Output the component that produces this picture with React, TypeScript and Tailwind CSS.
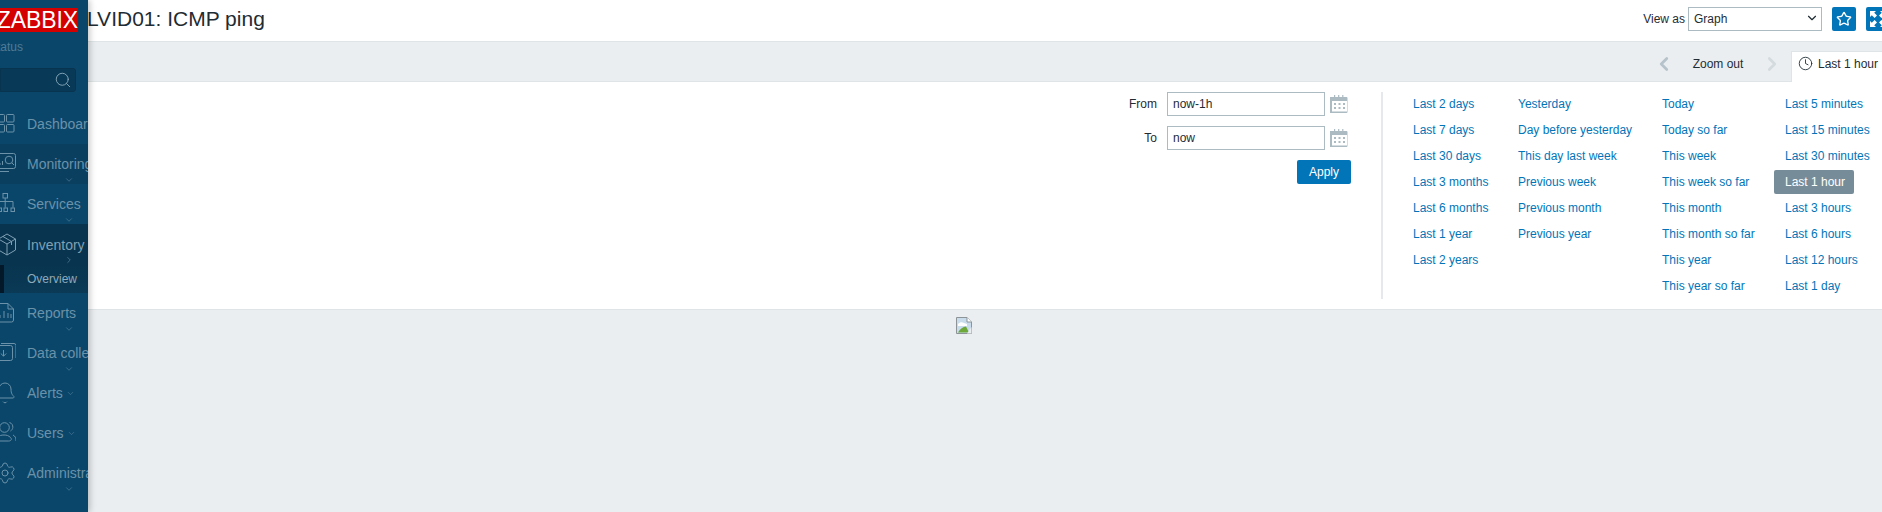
import type { ReactNode } from 'react'
import { Bell, ChevronDown, ChevronLeft, ChevronRight, Clock, Search, Settings, Star } from 'lucide-react'

const PRESETS = [
  { width: 'w-[105px]', items: ['Last 2 days', 'Last 7 days', 'Last 30 days', 'Last 3 months', 'Last 6 months', 'Last 1 year', 'Last 2 years'] },
  { width: 'w-[144px]', items: ['Yesterday', 'Day before yesterday', 'This day last week', 'Previous week', 'Previous month', 'Previous year'] },
  { width: 'w-[123px]', items: ['Today', 'Today so far', 'This week', 'This week so far', 'This month', 'This month so far', 'This year', 'This year so far'] },
  { width: 'w-[108px]', items: ['Last 5 minutes', 'Last 15 minutes', 'Last 30 minutes', 'Last 1 hour', 'Last 3 hours', 'Last 6 hours', 'Last 12 hours', 'Last 1 day'] },
]

// coordinates: x is the screen x, y is relative to the row centre
function Glyph({ children }: { children: ReactNode }) {
  return (
    <svg width="24" height="24" viewBox="-8 -12 24 24" fill="none" stroke="currentColor" strokeWidth="1" className="-ml-[8px] mr-[11px] shrink-0">
      {children}
    </svg>
  )
}

const ICONS: Record<string, ReactNode> = {
  dashboard: (
    <Glyph>
      <rect x="-2.5" y="-9.5" width="7" height="7.5" rx="1" />
      <rect x="6.5" y="-9.5" width="7.5" height="7.5" rx="1" />
      <rect x="-2.5" y="0.5" width="7" height="7.5" rx="1" />
      <rect x="6.5" y="0.5" width="7.5" height="7.5" rx="1" />
    </Glyph>
  ),
  monitoring: (
    <Glyph>
      <path d="M-5 -10.5H13.5a2 2 0 0 1 2 2V2.5a2 2 0 0 1-2 2H-5" />
      <path d="M0 7.5H9" />
      <circle cx="9" cy="-4" r="3.8" />
      <path d="M11.8 -1.2L14 1" />
      <path d="M0 1V-1M2.5 1V-3" />
    </Glyph>
  ),
  services: (
    <Glyph>
      <rect x="3" y="-10.5" width="4.5" height="4.5" />
      <path d="M5.2 -6V3.5M-2 -2.5H13V3.5" />
      <rect x="4" y="4" width="3.5" height="3.5" />
      <rect x="11" y="4" width="3.5" height="3.5" />
      <rect x="-3" y="4" width="4.5" height="3.5" />
    </Glyph>
  ),
  inventory: (
    <Glyph>
      <path d="M7 -11L15.5 -6V5L7 10L-1.5 5V-6Z" />
      <path d="M-1.5 -6L7 -1L15.5 -6M7 -1V10M3 -8.5L11.5 -3.5V0" />
    </Glyph>
  ),
  reports: (
    <Glyph>
      <path d="M-4 -9.5H8L13.5 -4V7a2 2 0 0 1-2 2H-4" />
      <path d="M8 -9.5V-4H13.5" />
      <path d="M1 5V2M5 5V-2M9 5V0M12 5V1" transform="translate(-1 0)" />
    </Glyph>
  ),
  data: (
    <Glyph>
      <path d="M-4 -7.5H10.5a2 2 0 0 1 2 2V5.5a2 2 0 0 1-2 2H-4" />
      <path d="M1 -9.5H14a2 2 0 0 1 2 2V5" />
      <path d="M3.5 -3V3M0.8 0.5L3.5 3.2L6.2 0.5" />
    </Glyph>
  ),
  alerts: <Bell size={24} strokeWidth={1} className="-ml-[7px] mr-[10px] shrink-0" />,
  users: (
    <Glyph>
      <circle cx="4.5" cy="-5.5" r="4.8" />
      <path d="M-4 8H8.5c3 0 3.5-2 2-3.5C8.5 2.5 6.5 2 4 2S-1 2.5-3 4.5C-4.5 6-4.5 8-4 8Z" />
      <path d="M9.5 -10.5c2.5 0.8 3.5 2.8 3.3 5c-0.2 1.6-1 2.7-2.3 3.5M13 2c2 1 3.3 3 3 6" />
    </Glyph>
  ),
  administration: <Settings size={24} strokeWidth={1} className="-ml-[7px] mr-[10px] shrink-0" />,
}

const MENU = [
  { key: 'dashboard', label: 'Dashboards' },
  { key: 'monitoring', label: 'Monitoring', arrow: 'below', dark: 'bg-[#0a3f60]' },
  { key: 'services', label: 'Services', arrow: 'below' },
  { key: 'inventory', label: 'Inventory', arrow: 'side', dark: 'bg-[#08344f]', bright: true },
  { key: 'reports', label: 'Reports', arrow: 'below' },
  { key: 'data', label: 'Data collection', arrow: 'below' },
  { key: 'alerts', label: 'Alerts', arrow: 'inline' },
  { key: 'users', label: 'Users', arrow: 'inline' },
  { key: 'administration', label: 'Administration', arrow: 'below' },
]

function Sidebar() {
  return (
    <aside className="relative z-10 flex h-full w-[88px] shrink-0 flex-col overflow-hidden bg-[#0a466a] shadow-[2px_0_6px_rgba(0,0,0,0.22)]">
      <div className="mt-[8px] flex h-[24px] w-[78px] items-center justify-end overflow-hidden bg-[#d40000] text-[23px] whitespace-nowrap text-white">
        <span className="tracking-[-0.1px]">ZABBIX</span>
      </div>
      <div className="mt-[8px] -ml-[11px] h-[14px] text-xs leading-[14px] text-[#4d7c98]">Status</div>
      <div className="mt-[14px] flex h-[24px] w-[76px] items-center justify-end rounded-r-[3px] border border-[#08344f] bg-[#083a58] pr-[3px] text-[#8aa9bb]">
        <Search size={18} strokeWidth={1.2} />
      </div>
      <nav className="mt-[12px] flex flex-col">
        {MENU.map(m => (
          <div key={m.key}>
            <div className={`relative flex items-center text-sm whitespace-nowrap ${m.key === 'inventory' ? 'h-[41px]' : 'h-[40px]'} ${m.dark ?? ''} ${m.bright ? 'text-[#7fa0b4]' : 'text-[#6b92a9]'}`}>
              {ICONS[m.key]}
              <span>{m.label}</span>
              {m.arrow === 'inline' && <ChevronDown size={9} strokeWidth={1.2} className="ml-[3px]" />}
              {m.arrow === 'below' && <ChevronDown size={10} strokeWidth={1.2} className="absolute top-[31px] left-[64px]" />}
              {m.arrow === 'side' && <ChevronRight size={10} strokeWidth={1.2} className="absolute top-[31px] left-[64px]" />}
            </div>
            {m.key === 'inventory' && (
              <div className="flex h-[28px] items-center bg-gradient-to-b from-[#08344f] to-[#0a3a56] text-xs text-[#8eaabb]">
                <div className="h-full w-[4px] bg-[#03192a]" />
                <span className="ml-[23px]">Overview</span>
              </div>
            )}
          </div>
        ))}
      </nav>
    </aside>
  )
}

function CalendarIcon() {
  return (
    <svg width="19" height="19" viewBox="0 0 19 19" className="mb-[2px] ml-[5px] shrink-0 text-[#acbbc2]" fill="currentColor">
      <path d="M1.5 3H4V1h1.2v2h2.9V1h1.2v2h2.9V1h1.2v2h3.1a1 1 0 0 1 1 1v14a1 1 0 0 1-1 1h-16a1 1 0 0 1-1-1V4a1 1 0 0 1 1-1Zm.5 4v10.5h15V7Z" />
      <path d="M4 9h2v2H4zM8.5 9h2v2h-2zM13 9h2v2h-2zM4 13h2v2H4zM8.5 13h2v2h-2zM13 13h2v2h-2z" />
    </svg>
  )
}

function DateRow({ label, value }: { label: string; value: string }) {
  return (
    <div className="mr-[2px] flex h-[24px] items-center">
      <label className="mr-[10px] text-right">{label}</label>
      <input readOnly value={value} className="h-[24px] w-[158px] border border-[#acbbc2] bg-white px-[5px] text-xs text-[#1f2c33] outline-none" />
      <CalendarIcon />
    </div>
  )
}

function BrokenImage() {
  return (
    <svg width="16" height="17" viewBox="0 0 16 17">
      <path d="M0.5 0.5H11L15.5 5V16.5H0.5Z" fill="#c9dcec" stroke="#8d9498" />
      <path d="M11 0.5V5H15.5" fill="#fff" stroke="#8d9498" />
      <path d="M2 7c2-2 4-2 6-1l3 1v2H2Z" fill="#fff" />
      <path d="M2 15.5C4 12 7 9.5 10 9.5l3 6Z" fill="#6fa83a" />
      <path d="M11 16.5L15.5 10V16.5Z" fill="#ebeef0" />
    </svg>
  )
}

export default function App() {
  return (
    <div className="flex h-[512px] w-full overflow-hidden bg-[#ebeef0] font-['Liberation_Sans',Arial,sans-serif] text-xs text-[#1f2c33]">
      <Sidebar />
      <main className="flex min-w-0 flex-1 flex-col">
        <header className="flex h-[41px] items-center justify-between bg-white pb-[3px]">
          <h1 className="-ml-[1px] text-[21px] font-normal">LVID01: ICMP ping</h1>
          <div className="-mr-[8px] flex items-center">
            <span className="mr-[3px]">View as</span>
            <div className="relative">
              <select defaultValue="Graph" className="block h-[24px] w-[134px] appearance-none border border-[#acbbc2] bg-white pl-[5px] text-xs outline-none">
                <option>Graph</option>
                <option>Values</option>
              </select>
              <ChevronDown size={14} strokeWidth={2} className="absolute top-[4px] right-[3px]" />
            </div>
            <button className="ml-[10px] flex h-[24px] w-[24px] items-center justify-center rounded-[2px] bg-[#0275b8] text-white">
              <Star size={16} strokeWidth={2} />
            </button>
            <button className="ml-[10px] flex h-[24px] w-[24px] items-center justify-center rounded-[2px] bg-[#0275b8] text-white">
              <svg width="18" height="18" viewBox="0 0 18 18" fill="#fff">
                <path d="M1 1h6L5.2 2.8 8 5.6 5.6 8 2.8 5.2 1 7ZM17 1v6l-1.8-1.8L12.4 8 10 5.6l2.8-2.8L11 1ZM1 17v-6l1.8 1.8L5.6 10 8 12.4l-2.8 2.8L7 17ZM17 17h-6l1.8-1.8L10 12.4l2.4-2.4 2.8 2.8L17 11Z" />
              </svg>
            </button>
          </div>
        </header>

        <div className="flex h-[41px] items-end justify-end border-t border-b border-[#dfe4e7] bg-[#ebeef0]">
          <div className="mb-[5px] flex h-[24px] items-center">
            <ChevronLeft size={22} strokeWidth={3} className="text-[#b6c3ca]" />
            <span className="ml-[17px] w-[52px] text-center whitespace-nowrap">Zoom out</span>
            <ChevronRight size={22} strokeWidth={3} className="ml-[17px] text-[#d4dbdf]" />
            <div className="w-[8px]" />
          </div>
          <div className="-mb-px flex h-[31px] w-[91px] items-start border-t border-l border-[#dfe4e7] bg-white pt-[4px] pl-[6px] whitespace-nowrap">
            <Clock size={15} strokeWidth={1.4} className="mr-[5px]" />
            Last 1 hour
          </div>
        </div>

        <section className="flex h-[228px] justify-end border-b border-[#dfe4e7] bg-white pt-[10px] pb-[10px]">
          <div className="mr-[30px] flex flex-col items-end gap-[10px]">
            <DateRow label="From" value="now-1h" />
            <DateRow label="To" value="now" />
            <button className="mr-0 h-[24px] w-[54px] rounded-[2px] bg-[#0275b8] text-xs text-white">Apply</button>
          </div>
          <div className="flex border-l-2 border-[#e6e9eb] pl-[19px]">
            {PRESETS.map(col => (
              <ul key={col.width} className={`flex flex-col gap-[2px] ${col.width}`}>
                {col.items.map(item => (
                  <li key={item} className="h-[24px]">
                    <a className={`inline-block h-[24px] rounded-[2px] px-[11px] leading-[24px] whitespace-nowrap ${item === 'Last 1 hour' ? 'w-[80px] bg-[#768d99] text-white' : 'text-[#0275b8]'}`}>
                      {item}
                    </a>
                  </li>
                ))}
              </ul>
            ))}
          </div>
        </section>

        <div className="pt-[7px] pl-[868px]">
          <BrokenImage />
        </div>
      </main>
    </div>
  )
}
